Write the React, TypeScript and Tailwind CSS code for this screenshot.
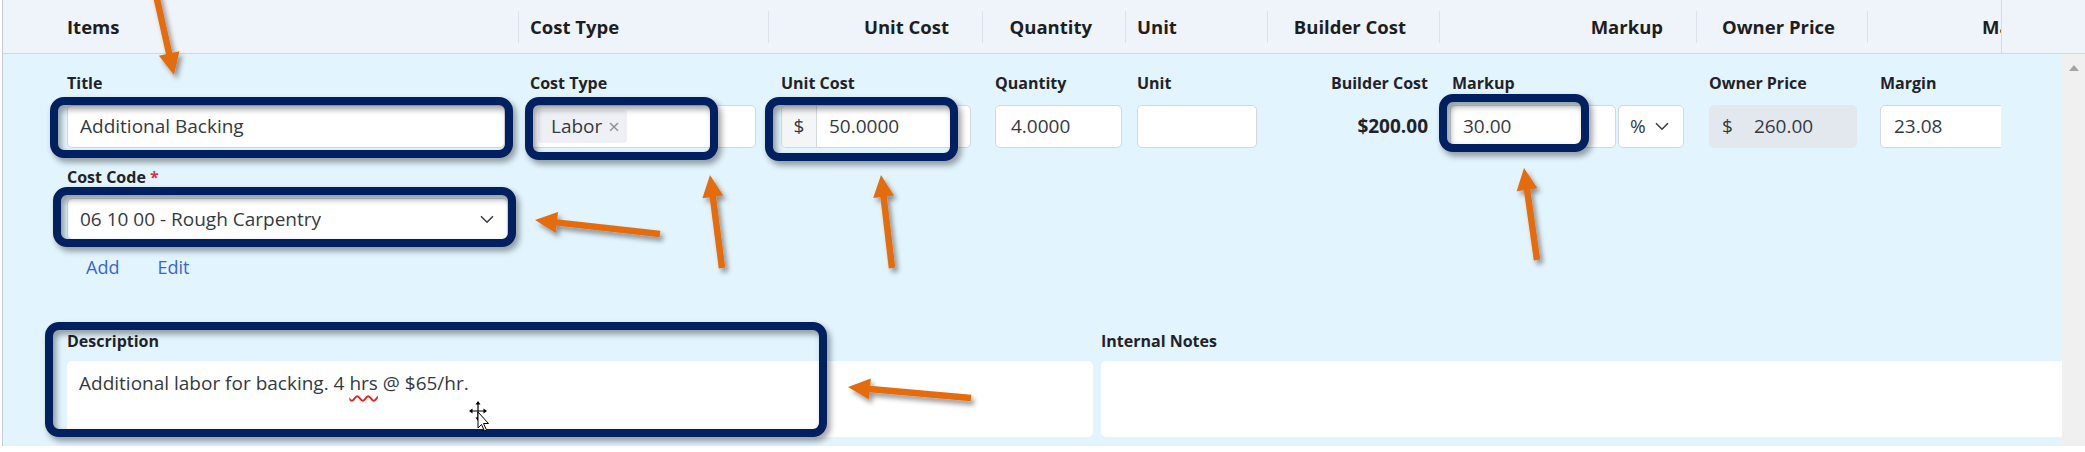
import React from "react";

type Pt = [number, number];

const arrows: { t: Pt; p: Pt }[] = [
  { t: [154, -14], p: [174, 75] },
  { t: [660, 234], p: [535, 220] },
  { t: [722, 268], p: [710, 175] },
  { t: [892, 268], p: [881, 175] },
  { t: [1537, 260], p: [1524, 168] },
  { t: [971, 398], p: [848, 387] },
];

function Arrow({ t, p }: { t: Pt; p: Pt }) {
  const dx = p[0] - t[0];
  const dy = p[1] - t[1];
  const len = Math.hypot(dx, dy);
  const ux = dx / len;
  const uy = dy / len;
  const nx = -uy;
  const ny = ux;
  const hl = 22;
  const hw = 10.5;
  const bx = p[0] - ux * hl;
  const by = p[1] - uy * hl;
  return (
    <g>
      <line x1={t[0]} y1={t[1]} x2={bx + ux * 3} y2={by + uy * 3} stroke="#e46c0a" strokeWidth={6.5} />
      <polygon
        points={`${p[0]},${p[1]} ${bx + nx * hw},${by + ny * hw} ${bx - nx * hw},${by - ny * hw}`}
        fill="#e46c0a"
      />
    </g>
  );
}

const boxes = [
  "left-[50px] top-[97px] w-[463px] h-[61px]",
  "left-[525px] top-[97px] w-[193px] h-[63px]",
  "left-[765px] top-[97px] w-[193px] h-[64px]",
  "left-[1439px] top-[94px] w-[150px] h-[58px]",
  "left-[53px] top-[187px] w-[463px] h-[60px]",
  "left-[45px] top-[322px] w-[782px] h-[115px]",
];

function Label({ children, className = "" }: { children: React.ReactNode; className?: string }) {
  return (
    <div className={`h-[22px] leading-[22px] text-[16px] font-bold text-[#1f2328] whitespace-nowrap mb-[11px] ${className}`}>
      {children}
    </div>
  );
}

const inputBase =
  "h-[43px] bg-white border border-[#d3d7de] rounded-[5px] flex items-center text-[19px] text-[#343a40] whitespace-nowrap";

function Chevron({ className = "" }: { className?: string }) {
  return (
    <svg className={className} width="14" height="9" viewBox="0 0 14 9" fill="none">
      <path d="M1 1.2 L7 7.2 L13 1.2" stroke="#3a3f45" strokeWidth="1.6" />
    </svg>
  );
}

export default function App() {
  return (
    <div className="relative w-[2085px] h-[452px] overflow-hidden bg-white font-['Open_Sans',sans-serif] text-[#212529]">
      <div className="ml-[2px] border-l border-[#c6cbd3] h-[446px] flex flex-col">
        {/* header */}
        <div className="h-[54px] shrink-0 flex items-center bg-[#eff3fa] border-b border-[#d3d8e0] text-[18.5px] font-bold text-[#1c1e21] whitespace-nowrap">
          <div className="w-[515px] pl-[64px]">Items</div>
          <div className="w-px h-[32px] bg-[#dde2ea]" />
          <div className="w-[249px] pl-[11px]">Cost Type</div>
          <div className="w-px h-[32px] bg-[#dde2ea]" />
          <div className="w-[213px] pr-[33px] text-right">Unit Cost</div>
          <div className="w-px h-[32px] bg-[#dde2ea]" />
          <div className="w-[142px] pr-[33px] text-right">Quantity</div>
          <div className="w-px h-[32px] bg-[#dde2ea]" />
          <div className="w-[141px] pl-[11px]">Unit</div>
          <div className="w-px h-[32px] bg-[#dde2ea]" />
          <div className="w-[171px] pr-[33px] text-right">Builder Cost</div>
          <div className="w-px h-[32px] bg-[#dde2ea]" />
          <div className="w-[256px] pr-[33px] text-right">Markup</div>
          <div className="w-px h-[32px] bg-[#dde2ea]" />
          <div className="w-[170px] pr-[32px] text-right">Owner Price</div>
          <div className="w-px h-[32px] bg-[#dde2ea]" />
          <div className="w-[133px] pl-[114px] overflow-hidden">Margin</div>
          <div className="flex-1 self-stretch border-l border-[#d6dbe3]" />
        </div>

        {/* body */}
        <div className="flex flex-1 bg-[#e2f4fd]">
          <div className="flex-1 flex flex-col pt-[18px] pl-[64px]">
            {/* row 1 */}
            <div className="w-[1934px] overflow-hidden">
              <div className="flex items-start w-[2000px]">
                <div className="w-[438px] mr-[25px]">
                  <Label>Title</Label>
                  <div className={`${inputBase} pl-[12px]`}>Additional Backing</div>
                </div>
                <div className="w-[226px] mr-[25px]">
                  <Label>Cost Type</Label>
                  <div className={`${inputBase} pl-[7px]`}>
                    <div className="h-[33px] w-[89px] rounded-[4px] bg-[#eef0f5] flex items-center pl-[13px]">
                      <span>Labor</span>
                      <span className="ml-[6px] text-[#8b9099] text-[20px]">×</span>
                    </div>
                  </div>
                </div>
                <div className="w-[190px] mr-[24px]">
                  <Label>Unit Cost</Label>
                  <div className={`${inputBase} overflow-hidden`}>
                    <div className="w-[35px] h-full bg-[#f4f5f7] border-r border-[#d3d7de] flex items-center justify-center">$</div>
                    <div className="pl-[12px]">50.0000</div>
                  </div>
                </div>
                <div className="w-[127px] mr-[15px]">
                  <Label>Quantity</Label>
                  <div className={`${inputBase} pl-[15px]`}>4.0000</div>
                </div>
                <div className="w-[120px]">
                  <Label>Unit</Label>
                  <div className={inputBase} />
                </div>
                <div className="w-[193px] pr-[22px] flex flex-col items-end">
                  <Label>Builder Cost</Label>
                  <div className="h-[43px] flex items-center text-[19px] font-bold text-[#1f2328]">$200.00</div>
                </div>
                <div className="w-[234px] mr-[25px]">
                  <Label className="pl-[2px]">Markup</Label>
                  <div className="flex gap-[2px]">
                    <div className={`${inputBase} w-[166px] pl-[12px]`}>30.00</div>
                    <div className={`${inputBase} w-[66px] pl-[11px] gap-[9px]`}>
                      <span>%</span>
                      <Chevron />
                    </div>
                  </div>
                </div>
                <div className="w-[148px] mr-[23px]">
                  <Label>Owner Price</Label>
                  <div className="h-[43px] bg-[#e3e8ef] rounded-[5px] flex items-center text-[19px] text-[#343a40] pl-[13px]">
                    <span>$</span>
                    <span className="ml-[21px]">260.00</span>
                  </div>
                </div>
                <div className="w-[150px]">
                  <Label>Margin</Label>
                  <div className={`${inputBase} pl-[13px]`}>23.08</div>
                </div>
              </div>
            </div>

            {/* row 2 */}
            <div className="mt-[18px]">
              <div className="h-[22px] leading-[22px] text-[16px] font-bold text-[#1f2328] whitespace-nowrap">
                Cost Code <span className="text-[#d6344c]">*</span>
              </div>
              <div className="mt-[10px] w-[441px] h-[42px] bg-white border border-[#d3d7de] rounded-[5px] flex items-center justify-between pl-[12px] pr-[13px] text-[19px] text-[#343a40]">
                <span>06 10 00 - Rough Carpentry</span>
                <Chevron />
              </div>
              <div className="mt-[16px] h-[22px] leading-[22px] flex gap-[38px] pl-[19px] text-[18px] text-[#3a63d6]">
                <span>Add</span>
                <span>Edit</span>
              </div>
            </div>

            {/* row 3 */}
            <div className="mt-[52px] flex gap-[8px]">
              <div className="w-[1026px]">
                <div className="h-[22px] leading-[22px] text-[16px] font-bold text-[#1f2328] mb-[9px]">Description</div>
                <div className="h-[76px] bg-white rounded-[5px] pl-[12px] pt-[9px] text-[19px] leading-[26px] text-[#343a40] whitespace-nowrap">
                  Additional labor for backing. 4{" "}
                  <span className="underline decoration-wavy decoration-[#e0201c] underline-offset-[5px] decoration-[1.5px]">hrs</span>{" "}
                  @ $65/hr.
                </div>
              </div>
              <div className="flex-1">
                <div className="h-[22px] leading-[22px] text-[16px] font-bold text-[#1f2328] mb-[9px]">Internal Notes</div>
                <div className="h-[76px] bg-white rounded-l-[5px]" />
              </div>
            </div>
          </div>

          {/* scrollbar */}
          <div className="w-[23px] bg-[#f0f0f0] flex flex-col items-center">
            <div className="mt-[11px] w-0 h-0 border-l-[5px] border-r-[5px] border-b-[6px] border-l-transparent border-r-transparent border-b-[#a3a3a3]" />
          </div>
        </div>
      </div>

      {/* annotation boxes */}
      {boxes.map((b, i) => (
        <div
          key={i}
          className={`absolute ${b} border-[8px] border-[#002060] rounded-[14px] [filter:drop-shadow(3px_4px_3px_rgba(0,0,0,0.4))] pointer-events-none`}
        />
      ))}

      {/* arrows */}
      <svg className="absolute left-0 top-0 pointer-events-none" width="2085" height="452">
        <defs>
          <filter id="ashadow" x="-20%" y="-20%" width="140%" height="140%">
            <feDropShadow dx="3" dy="4" stdDeviation="2.5" floodColor="#000" floodOpacity="0.4" />
          </filter>
        </defs>
        <g filter="url(#ashadow)">
          {arrows.map((a, i) => (
            <Arrow key={i} t={a.t} p={a.p} />
          ))}
        </g>
      </svg>

      {/* cursor */}
      <svg className="absolute left-[468px] top-[401px] pointer-events-none" width="28" height="32" viewBox="0 0 28 32">
        <path d="M10 1 L10 19 M2 10 L18 10" stroke="#000" strokeWidth="1.2" />
        <path d="M10 0 L7.5 3.5 L12.5 3.5 Z M10 20 L7.5 16.5 L12.5 16.5 Z M1 10 L4.5 7.5 L4.5 12.5 Z M19 10 L15.5 7.5 L15.5 12.5 Z" fill="#000" />
        <path d="M10 11 L10 27 L13.5 23.5 L16.5 30 L18.5 29 L15.5 22.5 L20.5 22.5 Z" fill="#fff" stroke="#000" strokeWidth="1" />
      </svg>
    </div>
  );
}
